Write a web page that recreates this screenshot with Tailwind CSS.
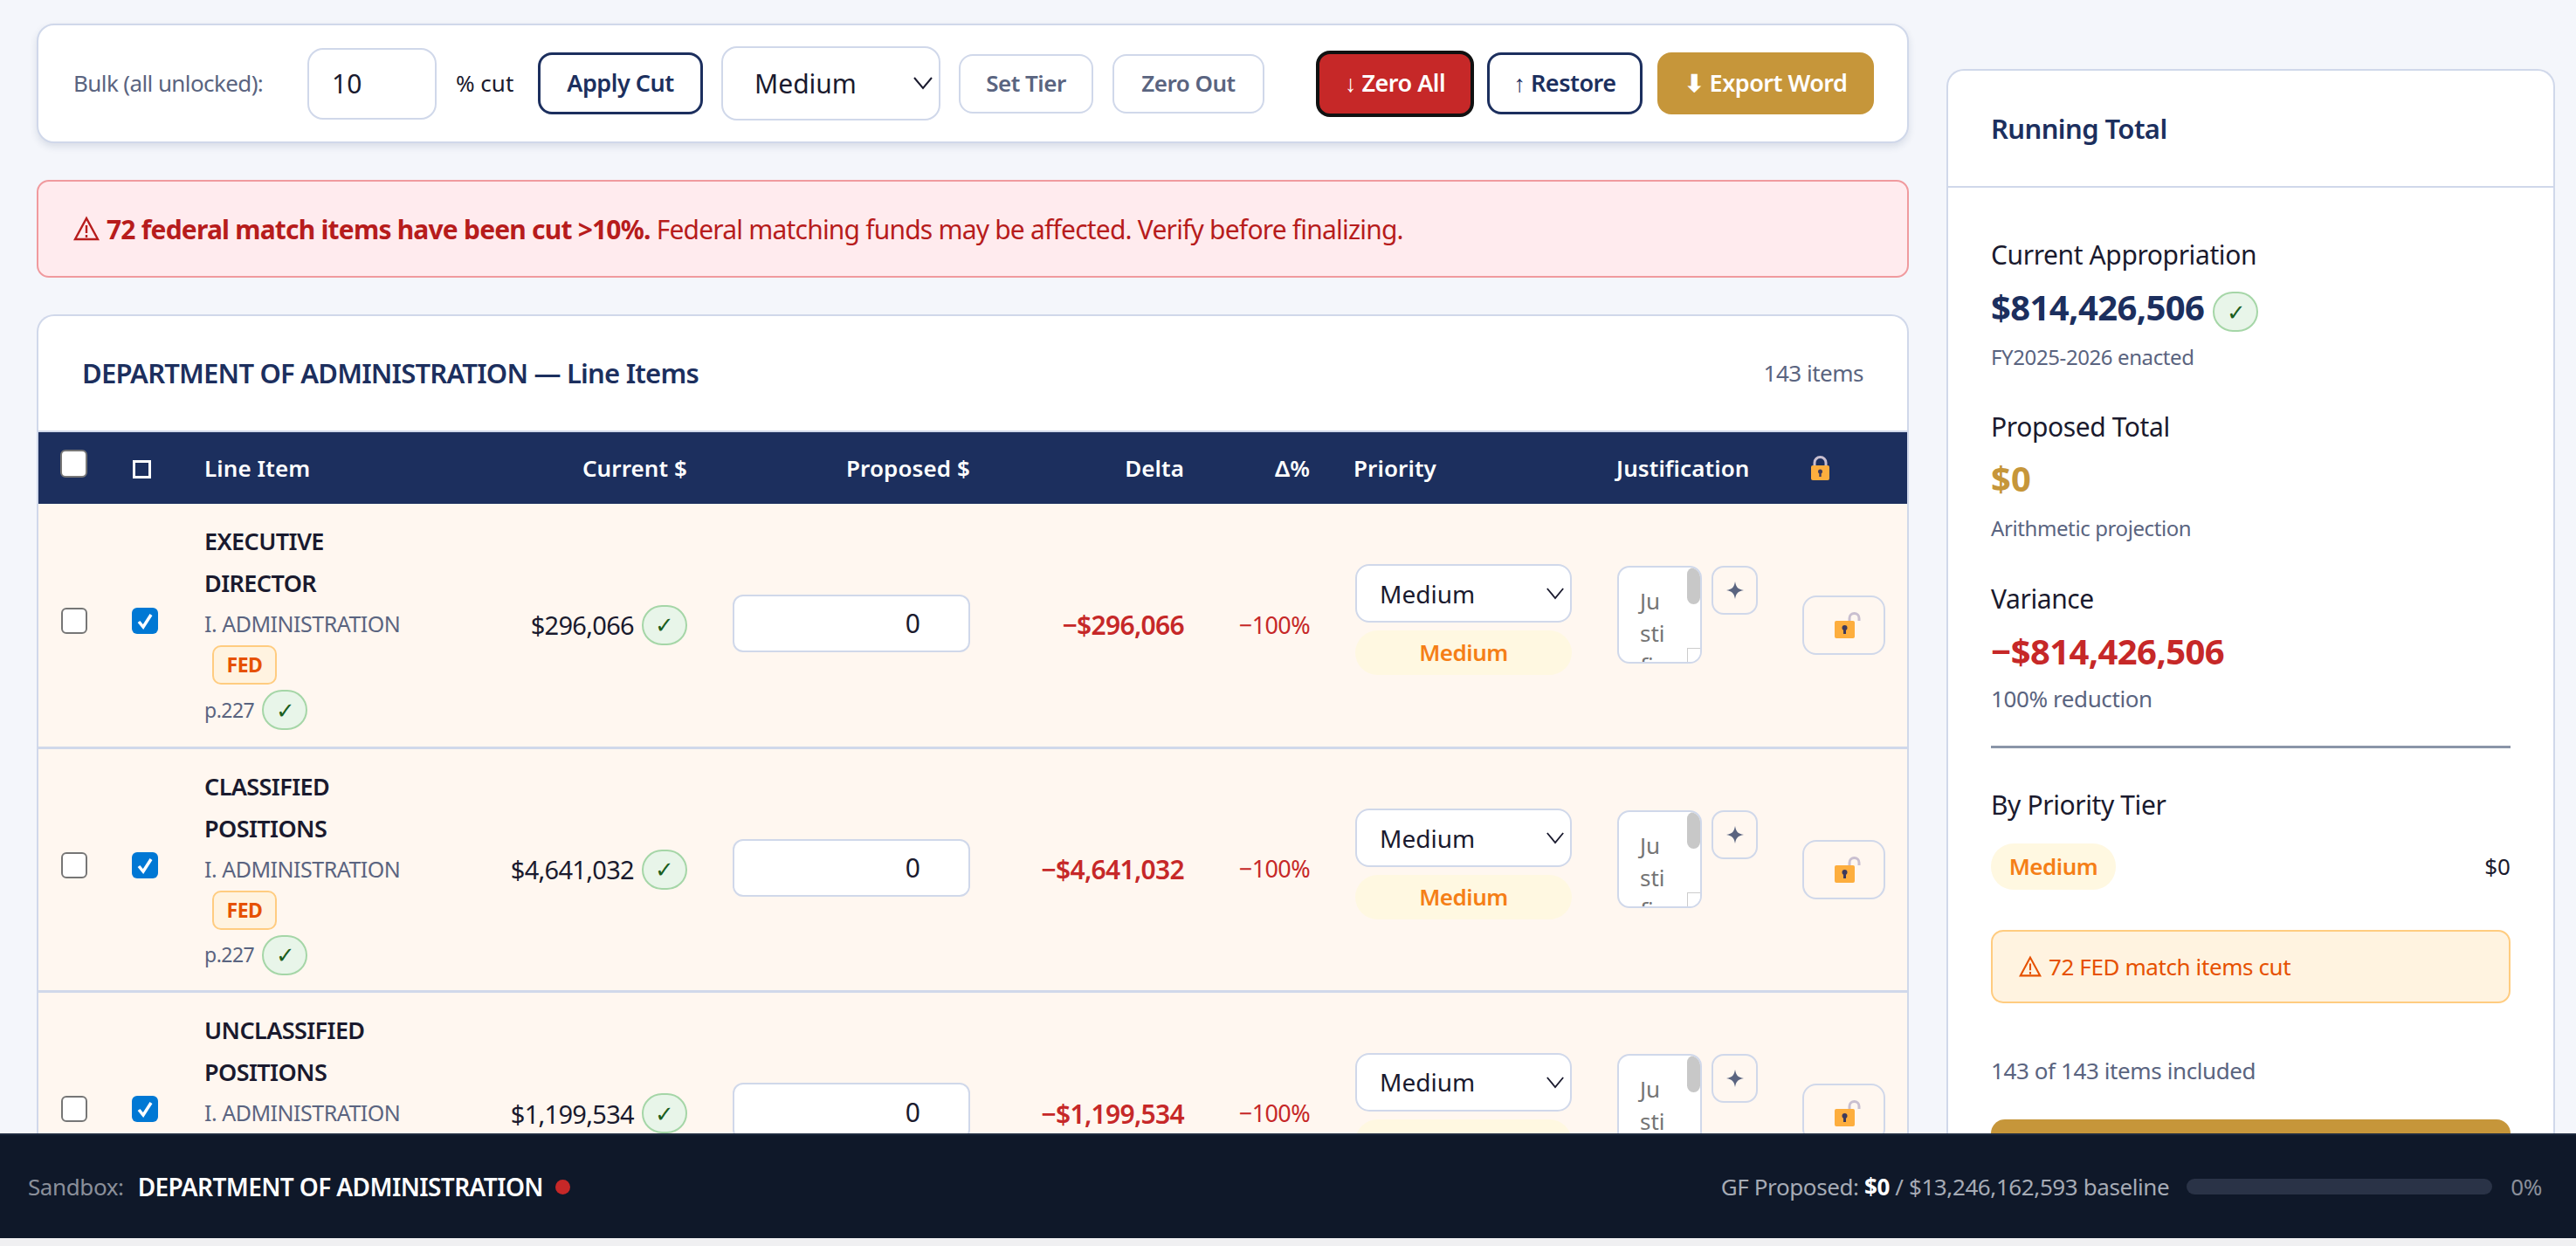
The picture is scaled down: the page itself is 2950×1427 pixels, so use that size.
<!DOCTYPE html>
<html lang="en">
<head>
    <meta charset="UTF-8">
    <title>Budget Sandbox</title>
    <script src="https://cdn.jsdelivr.net/npm/@tailwindcss/browser@4"></script>
</head>
<body class="relative h-screen overflow-hidden bg-[#f4f6fb] font-['Noto_Sans',sans-serif] text-[#1a1a2e]">
    <div class="flex items-start pl-[42px]">
        <!-- Left column -->
        <main class="w-[2144px] shrink-0 pt-[27px]">
            <!-- Toolbar -->
            <section class="flex h-[137px] items-center rounded-[20px] border-2 border-[#d0d8ea] bg-white pl-[40px] shadow-[0_4px_8px_rgba(28,47,94,0.12)]">
                <span class="w-[247px] text-[26px] tracking-[-0.6px] whitespace-nowrap text-[#5a6480]">Bulk (all unlocked):</span>
                <input type="text" value="10" class="ml-[21px] h-[82px] w-[148px] rounded-[18px] border-2 border-[#d0d8ea] bg-white pl-[26px] text-[30px]">
                <span class="ml-[22px] w-[74px] text-[26px] whitespace-nowrap">% cut</span>
                <button class="ml-[20px] h-[71px] w-[189px] rounded-[16px] border-[3px] border-[#1c2f5e] bg-white text-[27px] font-semibold tracking-[-0.5px] text-[#1c2f5e]">Apply Cut</button>
                <div class="relative ml-[21px] w-[251px]">
                    <select class="h-[85px] w-full appearance-none rounded-[18px] border-2 border-[#d0d8ea] bg-white pl-[36px] text-[30px]"><option>Medium</option></select>
                    <svg class="pointer-events-none absolute top-[34px] right-[8px] h-[16px] w-[24px]" viewBox="0 0 24 16" fill="none" stroke="#1a1a2e" stroke-width="2"><path d="M2 2l10 12L22 2"/></svg>
                </div>
                <button class="ml-[21px] h-[68px] w-[154px] rounded-[16px] border-2 border-[#d0d8ea] bg-white text-[26px] font-semibold tracking-[-0.5px] text-[#5a6480]">Set Tier</button>
                <button class="ml-[22px] h-[68px] w-[174px] rounded-[16px] border-2 border-[#d0d8ea] bg-white text-[26px] font-semibold tracking-[-0.5px] text-[#5a6480]">Zero Out</button>
                <button class="ml-[59px] h-[76px] w-[181px] rounded-[16px] border-[4px] border-[#111] bg-[#c62828] text-[27px] font-semibold tracking-[-0.5px] whitespace-nowrap text-white">↓ Zero All</button>
                <button class="ml-[15px] h-[71px] w-[178px] rounded-[16px] border-[3px] border-[#1c2f5e] bg-white text-[27px] font-semibold tracking-[-0.5px] whitespace-nowrap text-[#1c2f5e]">↑ Restore</button>
                <button class="ml-[17px] h-[71px] w-[248px] rounded-[16px] bg-[#c6963a] text-[27px] font-semibold tracking-[-0.5px] whitespace-nowrap text-white">⬇ Export Word</button>
            </section>

            <!-- Federal match alert -->
            <section class="mt-[42px] flex h-[112px] items-center gap-[8px] rounded-[14px] border-2 border-[#f09a9e] bg-[#ffebee] pl-[40px] text-[30px] tracking-[-0.8px] whitespace-nowrap text-[#b71c1c]">
                <svg class="h-[30px] w-[30px] shrink-0" viewBox="0 0 30 30" fill="none" stroke="#b71c1c" stroke-width="2.4"><path d="M15 3L2 27h26z"/><path d="M15 11v9M15 22v3"/></svg>
                <p><strong class="font-bold">72 federal match items have been cut &gt;10%.</strong> Federal matching funds may be affected. Verify before finalizing.</p>
            </section>

            <!-- Line items -->
            <section class="mt-[42px] overflow-hidden rounded-t-[20px] border-x-2 border-t-2 border-[#d0d8ea] bg-white">
                <header class="flex h-[133px] items-center justify-between border-b-2 border-[#d0d8ea] pr-[50px] pl-[50px]">
                    <h2 class="text-[31px] font-semibold tracking-[-0.8px] text-[#1c2f5e]">DEPARTMENT OF ADMINISTRATION — Line Items</h2>
                    <span class="text-[26px] tracking-[-0.5px] text-[#5a6480]">143 items</span>
                </header>
                <table class="w-full table-fixed border-collapse">
                    <colgroup>
                        <col class="w-[86px]"><col class="w-[104px]"><col class="w-[306px]"><col class="w-[247px]"><col class="w-[324px]"><col class="w-[245px]"><col class="w-[144px]"><col class="w-[300px]"><col class="w-[213px]"><col class="w-[146px]"><col>
                    </colgroup>
                    <thead class="bg-[#1c2f5e] text-[26px] font-semibold tracking-[0.1px] text-white">
                        <tr class="h-[82px]">
                            <th class="pl-[25px] text-left"><input type="checkbox" class="-mt-[10px] block h-[32px] w-[31px] appearance-none rounded-[6px] border-2 border-[#767676] bg-white"></th>
                            <th class="pl-[22px] text-left"><span class="mt-[3px] block h-[21px] w-[21px] border-[3px] border-white"></span></th>
                            <th class="text-left font-semibold">Line Item</th>
                            <th class="text-right font-semibold">Current $</th>
                            <th class="text-right font-semibold">Proposed $</th>
                            <th class="text-right font-semibold">Delta</th>
                            <th class="text-right font-semibold">Δ%</th>
                            <th class="pl-[50px] text-left font-semibold">Priority</th>
                            <th class="pl-[51px] text-left font-semibold">Justification</th>
                            <th class="pl-[60px] text-left">
                                <svg class="h-[28px] w-[23px]" viewBox="0 0 23 28"><path d="M5 14V8a6.500 6.500 0 0 1 13 0v6" fill="none" stroke="#c9bfd0" stroke-width="3"/><rect x="1" y="11" width="21" height="17" rx="2" fill="#fdae3e"/><circle cx="11.500" cy="18" r="2.500" fill="#3d3a5c"/><rect x="10.300" y="18" width="2.400" height="6" fill="#3d3a5c"/></svg>
                            </th>
                            <th></th>
                        </tr>
                    </thead>
                    <tbody class="bg-[#fff7f0]">
                        <!-- row: EXECUTIVE DIRECTOR -->
                        <tr class="h-[279px] border-b-[3px] border-[#d0d8ea]">
                            <td class="pl-[26px]"><input type="checkbox" class="-mt-[10px] block h-[30px] w-[30px] appearance-none rounded-[6px] border-2 border-[#767676] bg-white"></td>
                            <td class="pl-[21px]">
                                <span class="relative -mt-[10px] block h-[30px] w-[30px] rounded-[6px] bg-[#0078d4]">
                                    <input type="checkbox" checked class="absolute inset-0 appearance-none">
                                    <svg class="pointer-events-none absolute inset-0" viewBox="0 0 30 30" fill="none" stroke="#fff" stroke-width="3.500"><path d="M8 16l5 6 9-14"/></svg>
                                </span>
                            </td>
                            <td class="align-top pt-[19px]">
                                <div class="text-[27px] leading-[48px] font-semibold tracking-[-0.6px]">EXECUTIVE<br>DIRECTOR</div>
                                <div class="text-[25px] leading-[44px] tracking-[-0.5px] whitespace-nowrap text-[#5a6480]">I. ADMINISTRATION</div>
                                <div class="mt-[3px] ml-[9px] flex h-[45px] w-[74px] items-center justify-center rounded-[10px] border-2 border-[#ffcc80] bg-[#fff3e0] text-[23px] font-bold tracking-[-0.5px] text-[#e65100]">FED</div>
                                <div class="mt-[6px] flex items-center gap-[9px] text-[23px] tracking-[-0.5px] text-[#5a6480]">p.227
                                    <span class="flex h-[46px] w-[52px] items-center justify-center rounded-[23px] border-2 border-[#a5d6a7] bg-[#e8f5e9] text-[26px] text-[#1b5e20]">✓</span>
                                </div>
                            </td>
                            <td>
                                <div class="flex items-center justify-end gap-[9px] text-[29px] tracking-[-0.7px]">$296,066
                                    <span class="flex h-[46px] w-[52px] items-center justify-center rounded-[23px] border-2 border-[#a5d6a7] bg-[#e8f5e9] text-[26px] text-[#1b5e20]">✓</span>
                                </div>
                            </td>
                            <td class="pl-[52px]"><input type="text" value="0" class="-mt-[4px] block h-[66px] w-full rounded-[12px] border-2 border-[#d0d8ea] bg-white pr-[55px] text-right text-[30px]"></td>
                            <td class="text-right text-[30px] font-semibold tracking-[-0.7px] text-[#c62828]">−$296,066</td>
                            <td class="text-right text-[27px] tracking-[-0.6px] text-[#c62828]">−100%</td>
                            <td class="pl-[52px]">
                                <div class="relative -mt-[12px]">
                                    <select class="h-[67px] w-full appearance-none rounded-[16px] border-2 border-[#d0d8ea] bg-white pl-[26px] text-[28px]"><option>Medium</option></select>
                                    <svg class="pointer-events-none absolute top-[26px] right-[8px] h-[15px] w-[22px]" viewBox="0 0 24 16" fill="none" stroke="#1a1a2e" stroke-width="2"><path d="M2 2l10 12L22 2"/></svg>
                                </div>
                                <div class="mt-[9px] flex h-[51px] items-center justify-center rounded-[26px] bg-[#fff8e1] text-[26px] font-semibold tracking-[-0.5px] text-[#f57f17]">Medium</div>
                            </td>
                            <td class="pl-[52px]">
                                <div class="-mt-[24px] flex items-start gap-[11px]">
                                    <div class="relative h-[112px] w-[97px] overflow-hidden rounded-[14px] border-2 border-[#d0d8ea] bg-white pt-[20px] pl-[24px] text-[26px] leading-[37px] break-all text-[#757575]">
                                        <div class="w-[32px]">Justification...</div>
                                        <span class="absolute top-0 right-0 h-[42px] w-[15px] rounded-[8px] bg-[#c8c8c8]"></span>
                                        <span class="absolute right-0 bottom-0 h-[16px] w-[15px] border-t border-l border-[#ccc] bg-white"></span>
                                    </div>
                                    <button class="flex h-[56px] w-[53px] items-center justify-center rounded-[14px] border-2 border-[#d0d8ea]">
                                        <svg class="h-[20px] w-[20px]" viewBox="0 0 20 20" fill="#5a6480"><path d="M10 0c1 6 3 9 10 10-7 1-9 4-10 10-1-6-3-9-10-10 7-1 9-4 10-10z"/></svg>
                                    </button>
                                </div>
                            </td>
                            <td class="pl-[51px]">
                                <button class="flex h-[68px] w-[95px] items-center justify-center rounded-[16px] border-2 border-[#d0d8ea]">
                                    <svg class="ml-[8px] h-[30px] w-[30px]" viewBox="0 0 30 30"><path d="M17 12V7a5.500 5.500 0 0 1 11 0v3" fill="none" stroke="#c9bfd0" stroke-width="3"/><rect x="0" y="10" width="23" height="20" rx="2" fill="#fdae3e"/><circle cx="11.500" cy="18" r="3" fill="#3d3a5c"/><rect x="10" y="18" width="3" height="7" fill="#3d3a5c"/></svg>
                                </button>
                            </td>
                            <td></td>
                        </tr>
                        <!-- row: CLASSIFIED POSITIONS -->
                        <tr class="h-[279px] border-b-[3px] border-[#d0d8ea]">
                            <td class="pl-[26px]"><input type="checkbox" class="-mt-[10px] block h-[30px] w-[30px] appearance-none rounded-[6px] border-2 border-[#767676] bg-white"></td>
                            <td class="pl-[21px]">
                                <span class="relative -mt-[10px] block h-[30px] w-[30px] rounded-[6px] bg-[#0078d4]">
                                    <input type="checkbox" checked class="absolute inset-0 appearance-none">
                                    <svg class="pointer-events-none absolute inset-0" viewBox="0 0 30 30" fill="none" stroke="#fff" stroke-width="3.500"><path d="M8 16l5 6 9-14"/></svg>
                                </span>
                            </td>
                            <td class="align-top pt-[19px]">
                                <div class="text-[27px] leading-[48px] font-semibold tracking-[-0.6px]">CLASSIFIED<br>POSITIONS</div>
                                <div class="text-[25px] leading-[44px] tracking-[-0.5px] whitespace-nowrap text-[#5a6480]">I. ADMINISTRATION</div>
                                <div class="mt-[3px] ml-[9px] flex h-[45px] w-[74px] items-center justify-center rounded-[10px] border-2 border-[#ffcc80] bg-[#fff3e0] text-[23px] font-bold tracking-[-0.5px] text-[#e65100]">FED</div>
                                <div class="mt-[6px] flex items-center gap-[9px] text-[23px] tracking-[-0.5px] text-[#5a6480]">p.227
                                    <span class="flex h-[46px] w-[52px] items-center justify-center rounded-[23px] border-2 border-[#a5d6a7] bg-[#e8f5e9] text-[26px] text-[#1b5e20]">✓</span>
                                </div>
                            </td>
                            <td>
                                <div class="flex items-center justify-end gap-[9px] text-[29px] tracking-[-0.7px]">$4,641,032
                                    <span class="flex h-[46px] w-[52px] items-center justify-center rounded-[23px] border-2 border-[#a5d6a7] bg-[#e8f5e9] text-[26px] text-[#1b5e20]">✓</span>
                                </div>
                            </td>
                            <td class="pl-[52px]"><input type="text" value="0" class="-mt-[4px] block h-[66px] w-full rounded-[12px] border-2 border-[#d0d8ea] bg-white pr-[55px] text-right text-[30px]"></td>
                            <td class="text-right text-[30px] font-semibold tracking-[-0.7px] text-[#c62828]">−$4,641,032</td>
                            <td class="text-right text-[27px] tracking-[-0.6px] text-[#c62828]">−100%</td>
                            <td class="pl-[52px]">
                                <div class="relative -mt-[12px]">
                                    <select class="h-[67px] w-full appearance-none rounded-[16px] border-2 border-[#d0d8ea] bg-white pl-[26px] text-[28px]"><option>Medium</option></select>
                                    <svg class="pointer-events-none absolute top-[26px] right-[8px] h-[15px] w-[22px]" viewBox="0 0 24 16" fill="none" stroke="#1a1a2e" stroke-width="2"><path d="M2 2l10 12L22 2"/></svg>
                                </div>
                                <div class="mt-[9px] flex h-[51px] items-center justify-center rounded-[26px] bg-[#fff8e1] text-[26px] font-semibold tracking-[-0.5px] text-[#f57f17]">Medium</div>
                            </td>
                            <td class="pl-[52px]">
                                <div class="-mt-[24px] flex items-start gap-[11px]">
                                    <div class="relative h-[112px] w-[97px] overflow-hidden rounded-[14px] border-2 border-[#d0d8ea] bg-white pt-[20px] pl-[24px] text-[26px] leading-[37px] break-all text-[#757575]">
                                        <div class="w-[32px]">Justification...</div>
                                        <span class="absolute top-0 right-0 h-[42px] w-[15px] rounded-[8px] bg-[#c8c8c8]"></span>
                                        <span class="absolute right-0 bottom-0 h-[16px] w-[15px] border-t border-l border-[#ccc] bg-white"></span>
                                    </div>
                                    <button class="flex h-[56px] w-[53px] items-center justify-center rounded-[14px] border-2 border-[#d0d8ea]">
                                        <svg class="h-[20px] w-[20px]" viewBox="0 0 20 20" fill="#5a6480"><path d="M10 0c1 6 3 9 10 10-7 1-9 4-10 10-1-6-3-9-10-10 7-1 9-4 10-10z"/></svg>
                                    </button>
                                </div>
                            </td>
                            <td class="pl-[51px]">
                                <button class="flex h-[68px] w-[95px] items-center justify-center rounded-[16px] border-2 border-[#d0d8ea]">
                                    <svg class="ml-[8px] h-[30px] w-[30px]" viewBox="0 0 30 30"><path d="M17 12V7a5.500 5.500 0 0 1 11 0v3" fill="none" stroke="#c9bfd0" stroke-width="3"/><rect x="0" y="10" width="23" height="20" rx="2" fill="#fdae3e"/><circle cx="11.500" cy="18" r="3" fill="#3d3a5c"/><rect x="10" y="18" width="3" height="7" fill="#3d3a5c"/></svg>
                                </button>
                            </td>
                            <td></td>
                        </tr>
                        <!-- row: UNCLASSIFIED POSITIONS -->
                        <tr class="h-[279px]">
                            <td class="pl-[26px]"><input type="checkbox" class="-mt-[10px] block h-[30px] w-[30px] appearance-none rounded-[6px] border-2 border-[#767676] bg-white"></td>
                            <td class="pl-[21px]">
                                <span class="relative -mt-[10px] block h-[30px] w-[30px] rounded-[6px] bg-[#0078d4]">
                                    <input type="checkbox" checked class="absolute inset-0 appearance-none">
                                    <svg class="pointer-events-none absolute inset-0" viewBox="0 0 30 30" fill="none" stroke="#fff" stroke-width="3.500"><path d="M8 16l5 6 9-14"/></svg>
                                </span>
                            </td>
                            <td class="align-top pt-[19px]">
                                <div class="text-[27px] leading-[48px] font-semibold tracking-[-0.6px]">UNCLASSIFIED<br>POSITIONS</div>
                                <div class="text-[25px] leading-[44px] tracking-[-0.5px] whitespace-nowrap text-[#5a6480]">I. ADMINISTRATION</div>
                                <div class="mt-[3px] ml-[9px] flex h-[45px] w-[74px] items-center justify-center rounded-[10px] border-2 border-[#ffcc80] bg-[#fff3e0] text-[23px] font-bold tracking-[-0.5px] text-[#e65100]">FED</div>
                                <div class="mt-[6px] flex items-center gap-[9px] text-[23px] tracking-[-0.5px] text-[#5a6480]">p.227
                                    <span class="flex h-[46px] w-[52px] items-center justify-center rounded-[23px] border-2 border-[#a5d6a7] bg-[#e8f5e9] text-[26px] text-[#1b5e20]">✓</span>
                                </div>
                            </td>
                            <td>
                                <div class="flex items-center justify-end gap-[9px] text-[29px] tracking-[-0.7px]">$1,199,534
                                    <span class="flex h-[46px] w-[52px] items-center justify-center rounded-[23px] border-2 border-[#a5d6a7] bg-[#e8f5e9] text-[26px] text-[#1b5e20]">✓</span>
                                </div>
                            </td>
                            <td class="pl-[52px]"><input type="text" value="0" class="-mt-[4px] block h-[66px] w-full rounded-[12px] border-2 border-[#d0d8ea] bg-white pr-[55px] text-right text-[30px]"></td>
                            <td class="text-right text-[30px] font-semibold tracking-[-0.7px] text-[#c62828]">−$1,199,534</td>
                            <td class="text-right text-[27px] tracking-[-0.6px] text-[#c62828]">−100%</td>
                            <td class="pl-[52px]">
                                <div class="relative -mt-[12px]">
                                    <select class="h-[67px] w-full appearance-none rounded-[16px] border-2 border-[#d0d8ea] bg-white pl-[26px] text-[28px]"><option>Medium</option></select>
                                    <svg class="pointer-events-none absolute top-[26px] right-[8px] h-[15px] w-[22px]" viewBox="0 0 24 16" fill="none" stroke="#1a1a2e" stroke-width="2"><path d="M2 2l10 12L22 2"/></svg>
                                </div>
                                <div class="mt-[9px] flex h-[51px] items-center justify-center rounded-[26px] bg-[#fff8e1] text-[26px] font-semibold tracking-[-0.5px] text-[#f57f17]">Medium</div>
                            </td>
                            <td class="pl-[52px]">
                                <div class="-mt-[24px] flex items-start gap-[11px]">
                                    <div class="relative h-[112px] w-[97px] overflow-hidden rounded-[14px] border-2 border-[#d0d8ea] bg-white pt-[20px] pl-[24px] text-[26px] leading-[37px] break-all text-[#757575]">
                                        <div class="w-[32px]">Justification...</div>
                                        <span class="absolute top-0 right-0 h-[42px] w-[15px] rounded-[8px] bg-[#c8c8c8]"></span>
                                        <span class="absolute right-0 bottom-0 h-[16px] w-[15px] border-t border-l border-[#ccc] bg-white"></span>
                                    </div>
                                    <button class="flex h-[56px] w-[53px] items-center justify-center rounded-[14px] border-2 border-[#d0d8ea]">
                                        <svg class="h-[20px] w-[20px]" viewBox="0 0 20 20" fill="#5a6480"><path d="M10 0c1 6 3 9 10 10-7 1-9 4-10 10-1-6-3-9-10-10 7-1 9-4 10-10z"/></svg>
                                    </button>
                                </div>
                            </td>
                            <td class="pl-[51px]">
                                <button class="flex h-[68px] w-[95px] items-center justify-center rounded-[16px] border-2 border-[#d0d8ea]">
                                    <svg class="ml-[8px] h-[30px] w-[30px]" viewBox="0 0 30 30"><path d="M17 12V7a5.500 5.500 0 0 1 11 0v3" fill="none" stroke="#c9bfd0" stroke-width="3"/><rect x="0" y="10" width="23" height="20" rx="2" fill="#fdae3e"/><circle cx="11.500" cy="18" r="3" fill="#3d3a5c"/><rect x="10" y="18" width="3" height="7" fill="#3d3a5c"/></svg>
                                </button>
                            </td>
                            <td></td>
                        </tr>
                    </tbody>
                </table>
            </section>
        </main>

        <!-- Running total -->
        <aside class="mt-[79px] ml-[43px] w-[697px] shrink-0 rounded-t-[20px] border-x-2 border-t-2 border-[#d0d8ea] bg-white">
            <header class="flex h-[134px] items-center border-b-2 border-[#d0d8ea] pl-[49px]">
                <h3 class="text-[31px] font-semibold tracking-[-0.6px] text-[#1c2f5e]">Running Total</h3>
            </header>
            <div class="px-[49px] pt-[57px]">
                <div class="text-[30px] leading-[40px] tracking-[-0.4px]">Current Appropriation</div>
                <div class="mt-[17px] flex h-[46px] items-center gap-[10px] text-[40px] leading-[46px] font-bold tracking-[-0.6px] text-[#1c2f5e]">$814,426,506
                    <span class="mt-[10px] flex h-[46px] w-[52px] items-center justify-center rounded-[23px] border-2 border-[#a5d6a7] bg-[#e8f5e9] text-[26px] font-normal text-[#1b5e20]">✓</span>
                </div>
                <div class="mt-[16px] text-[24px] leading-[36px] tracking-[-0.4px] text-[#5a6480]">FY2025-2026 enacted</div>
                <div class="mt-[42px] text-[30px] leading-[40px] tracking-[-0.4px]">Proposed Total</div>
                <div class="mt-[16px] text-[40px] leading-[46px] font-bold text-[#c6963a]">$0</div>
                <div class="mt-[16px] text-[24px] leading-[36px] tracking-[-0.4px] text-[#5a6480]">Arithmetic projection</div>
                <div class="mt-[43px] text-[30px] leading-[40px] tracking-[-0.4px]">Variance</div>
                <div class="mt-[17px] text-[40px] leading-[46px] font-bold tracking-[-0.6px] text-[#c62828]">−$814,426,506</div>
                <div class="mt-[13px] text-[26px] leading-[36px] tracking-[-0.4px] text-[#5a6480]">100% reduction</div>
                <div class="mt-[36px] h-[3px] bg-[#8a95a8]"></div>
                <div class="mt-[45px] text-[30px] leading-[40px] tracking-[-0.4px]">By Priority Tier</div>
                <div class="mt-[24px] flex h-[53px] items-center justify-between">
                    <span class="flex h-[53px] w-[143px] items-center justify-center rounded-[26px] bg-[#fff8e1] text-[26px] font-semibold tracking-[-0.5px] text-[#f57f17]">Medium</span>
                    <span class="text-[26px]">$0</span>
                </div>
                <div class="mt-[46px] flex h-[84px] items-center gap-[8px] rounded-[14px] border-2 border-[#ffcc80] bg-[#fff3e0] pl-[30px] text-[26px] tracking-[-0.4px] text-[#e65100]">
                    <svg class="h-[26px] w-[26px] shrink-0" viewBox="0 0 30 30" fill="none" stroke="#e65100" stroke-width="2.400"><path d="M15 3L2 27h26z"/><path d="M15 11v9M15 22v3"/></svg>
                    72 FED match items cut
                </div>
                <div class="mt-[59px] text-[26px] leading-[36px] tracking-[-0.4px] text-[#5a6480]">143 of 143 items included</div>
                <div class="mt-[38px] h-[90px] rounded-t-[16px] bg-[#c6963a]"></div>
            </div>
        </aside>
    </div>

    <!-- Sandbox status bar -->
    <footer class="absolute inset-x-0 bottom-0 border-b-[9px] border-[#f0f0f2]">
        <div class="flex h-[120px] items-center justify-between border-t-2 border-[#1e2a3e] bg-[#0f1829] pr-[39px] pl-[32px] text-[26px] tracking-[-0.4px]">
            <div class="flex items-center">
                <span class="text-[#8a8f9a]">Sandbox:</span>
                <span class="ml-[16px] text-[28px] font-semibold tracking-[-0.6px] text-white">DEPARTMENT OF ADMINISTRATION</span>
                <span class="ml-[14px] h-[17px] w-[17px] rounded-full bg-[#c62828]"></span>
            </div>
            <div class="flex items-center">
                <span class="text-[#a6abb5]">GF Proposed: <strong class="font-bold text-white">$0</strong> / $13,246,162,593 baseline</span>
                <span class="ml-[20px] h-[18px] w-[350px] rounded-full bg-[#2a3347]"></span>
                <span class="ml-[21px] text-[#8a8f9a]">0%</span>
            </div>
        </div>
    </footer>
</body>
</html>
